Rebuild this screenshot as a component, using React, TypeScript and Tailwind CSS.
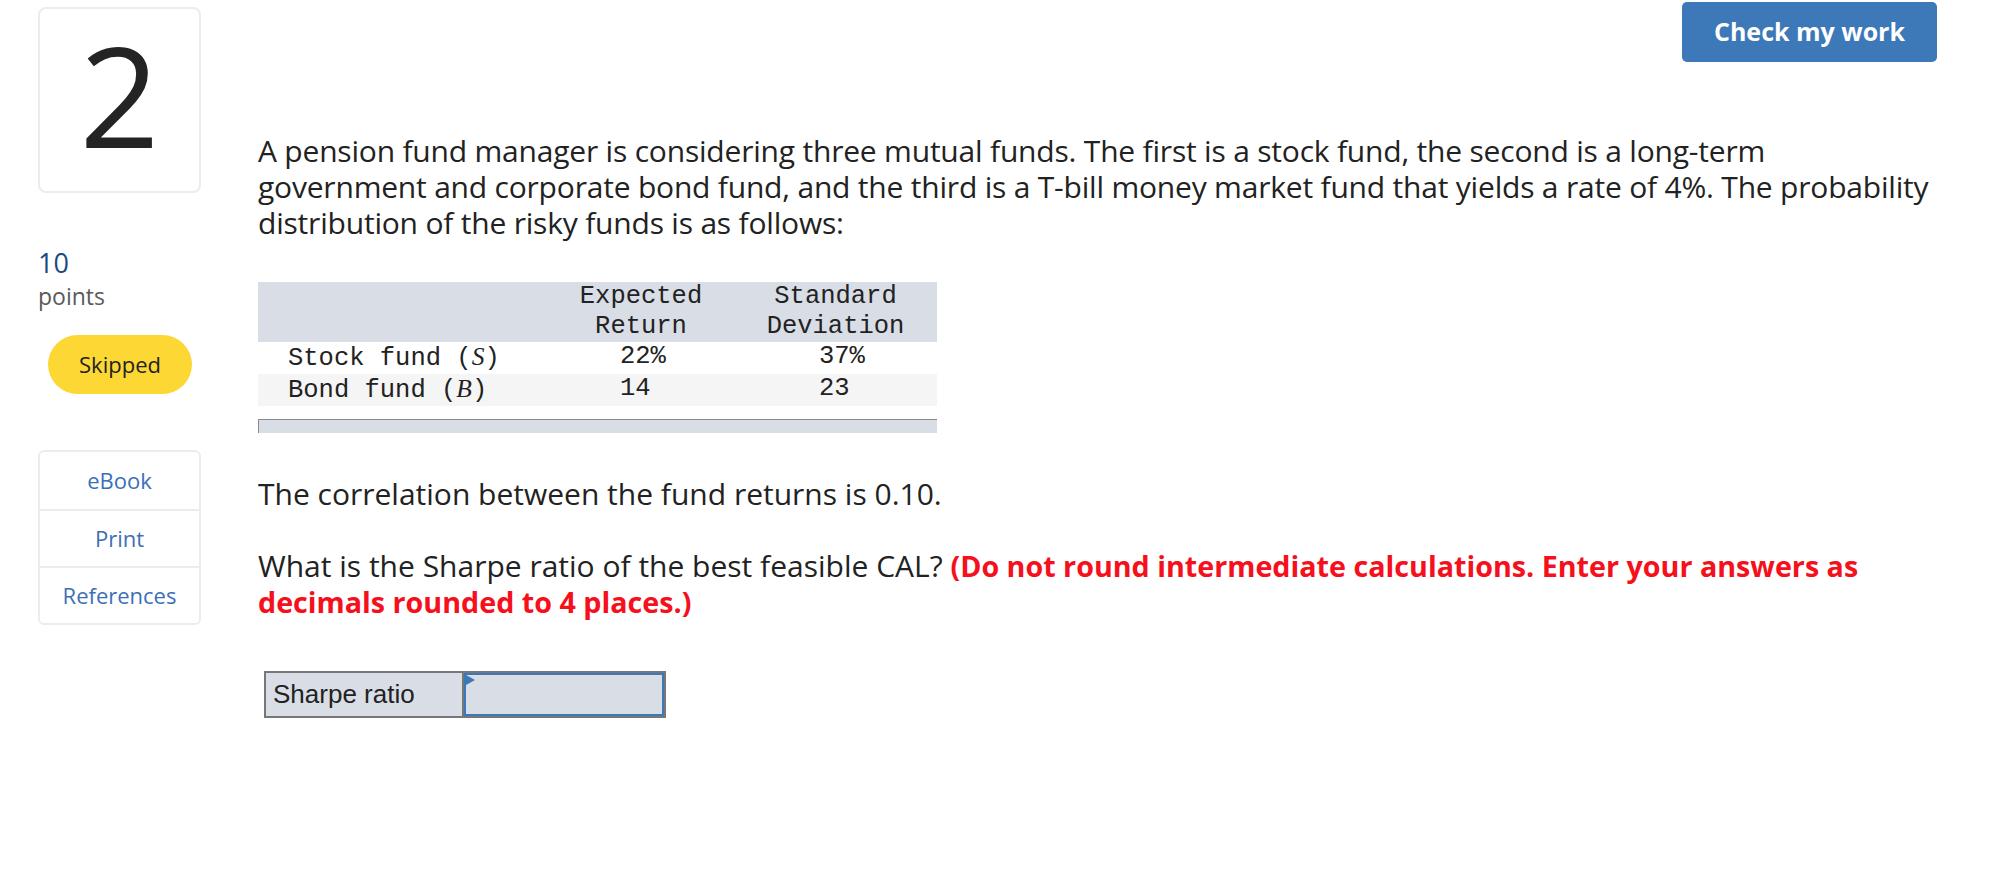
import React from 'react';

const sans = "font-['Open_Sans','Lato',sans-serif]";

function SideNav() {
  return (
    <aside className={`w-[201px] shrink-0 pl-[38px] pt-[7px] ${sans}`}>
      {/* Question number */}
      <div className="flex h-[186px] w-[163px] items-center justify-center rounded-[8px] border-2 border-[#ececec]">
        <span className="text-[140px] leading-none font-normal text-[#242424] -mt-[12px]">2</span>
      </div>

      <div className="mt-[55px] text-[27px] leading-[30px] text-[#1b4a82]">10</div>
      <div className="mt-[3px] text-[23px] leading-[30px] text-[#5a5a5a]">points</div>

      <div className="mt-[24px] ml-[10px] flex h-[59px] w-[144px] items-center justify-center rounded-full bg-[#fdd835] text-[22px] text-[#222]">
        Skipped
      </div>

      <div className="mt-[56px] w-[163px] overflow-hidden rounded-[6px] border-2 border-[#ececec] text-[22px] text-[#3b70b6]">
        {['eBook', 'Print', 'References'].map((item, i) => (
          <div
            key={item}
            className={`flex h-[57px] items-center justify-center ${i > 0 ? 'border-t-2 border-[#ececec]' : ''}`}
          >
            {item}
          </div>
        ))}
      </div>
    </aside>
  );
}

function FundTable() {
  const mono = "font-['Liberation_Mono','Courier_New',monospace] text-[25.5px] leading-[30px] text-[#222]";
  const cols = 'grid grid-cols-[290px_186px_203px]';
  return (
    <div className={`mt-[41px] w-[679px] ${mono}`}>
      <div className={`${cols} bg-[#d9dde6]`}>
        <div />
        <div className="text-center">
          Expected
          <br />
          Return
        </div>
        <div className="text-center">
          Standard
          <br />
          Deviation
        </div>
      </div>
      <div className={`${cols} bg-white`}>
        <div className="pl-[30px]">
          Stock fund (<i className="font-['Liberation_Serif',serif]">S</i>)
        </div>
        <div className="pl-[72px]">22%</div>
        <div className="pl-[85px]">37%</div>
      </div>
      <div className={`${cols} bg-[#f5f5f5]`}>
        <div className="pl-[30px]">
          Bond fund (<i className="font-['Liberation_Serif',serif]">B</i>)
        </div>
        <div className="pl-[72px]">14</div>
        <div className="pl-[85px]">23</div>
      </div>
      <div className="mt-[13px] h-[14px] border-t border-l border-[#8a8a8a] bg-[#d9dde6]" />
    </div>
  );
}

function AnswerBox() {
  return (
    <div className="mt-[51px] ml-[6px] flex h-[47px] w-[402px] border-2 border-[#777] bg-[#d9dde6] font-['Liberation_Sans',Arial,sans-serif]">
      <div className="flex w-[198px] items-center border-r-2 border-[#777] pl-[7px] text-[26px] text-[#222]">
        Sharpe ratio
      </div>
      <div className="relative flex-1 border-2 border-[#3d78b8]">
        <span className="absolute left-0 top-0 h-0 w-0 border-y-[5px] border-l-[9px] border-y-transparent border-l-[#3d78b8]" />
      </div>
    </div>
  );
}

export default function App() {
  return (
    <div className="flex min-h-[880px] w-full bg-white">
      <SideNav />
      <main className={`min-w-0 flex-1 pl-[57px] pr-[79px] ${sans}`}>
        <div className="flex justify-end pt-[2px]">
          <button className="h-[60px] w-[255px] rounded-[5px] bg-[#3d78b8] text-[25px] font-bold text-white">
            Check my work
          </button>
        </div>

        <p className="mt-[71px] whitespace-nowrap text-[30px] leading-[36px] tracking-[-0.2px] text-[#222]">
          A pension fund manager is considering three mutual funds. The first is a stock fund, the second is a long-term
          <br />
          government and corporate bond fund, and the third is a T-bill money market fund that yields a rate of 4%. The probability
          <br />
          distribution of the risky funds is as follows:
        </p>

        <FundTable />

        <p className="mt-[43px] text-[30px] leading-[36px] text-[#222]">
          The correlation between the fund returns is 0.10.
        </p>

        <p className="mt-[36px] whitespace-nowrap text-[30px] leading-[36px] text-[#222]">
          What is the Sharpe ratio of the best feasible CAL?{' '}
          <span className="font-bold text-[28.7px] text-[#f5101c]">
            (Do not round intermediate calculations. Enter your answers as
            <br />
            decimals rounded to 4 places.)
          </span>
        </p>

        <AnswerBox />
      </main>
    </div>
  );
}
